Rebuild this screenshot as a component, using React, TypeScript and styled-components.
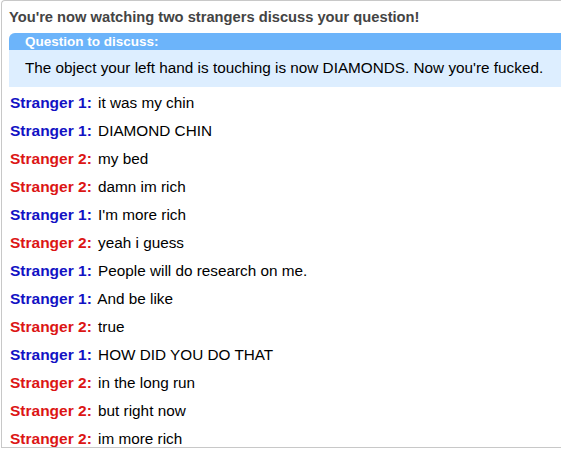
import React from "react";
import styled, { createGlobalStyle } from "styled-components";

const Global = createGlobalStyle`
  html, body { margin: 0; padding: 0; background: #fff; }
  body { font-family: "Liberation Sans", Arial, sans-serif; }
`;

const LogBox = styled.div`
  margin-left: 1px;
  width: 560px;
  height: 448px;
  box-sizing: border-box;
  border: 1px solid #c8c8c8;
  border-right: none;
  border-top-left-radius: 4px;
  padding: 6px 0 0 7px;
  overflow: hidden;
`;

const Status = styled.div`
  font-size: 14.7px;
  line-height: 20px;
  font-weight: bold;
  color: #444;
  white-space: nowrap;
`;

const Question = styled.div`
  margin-top: 6px;
  border-top-left-radius: 6px;
  overflow: hidden;
  background: #ddeeff;
`;

const QuestionHead = styled.div`
  background: #6cb4fa;
  color: #fff;
  font-weight: bold;
  font-size: 13.5px;
  height: 17px;
  line-height: 17px;
  padding-left: 16px;
`;

const QuestionText = styled.div`
  color: #000;
  font-size: 15.3px;
  height: 37px;
  line-height: 36px;
  padding-left: 16px;
  white-space: nowrap;
`;

const Messages = styled.div`
  margin-top: 2px;
  padding-left: 1px;
`;

const Row = styled.div`
  height: 28px;
  line-height: 28px;
  font-size: 15.3px;
  color: #000;
  white-space: nowrap;
`;

const Who = styled.strong<{ $who: 1 | 2 }>`
  color: ${(p) => (p.$who === 1 ? "#1212c4" : "#dc1515")};
  font-weight: bold;
  font-size: 15.5px;
  margin-right: 2px;
`;

const msgs: [1 | 2, string][] = [
  [1, "it was my chin"],
  [1, "DIAMOND CHIN"],
  [2, "my bed"],
  [2, "damn im rich"],
  [1, "I'm more rich"],
  [2, "yeah i guess"],
  [1, "People will do research on me."],
  [1, "And be like"],
  [2, "true"],
  [1, "HOW DID YOU DO THAT"],
  [2, "in the long run"],
  [2, "but right now"],
  [2, "im more rich"],
];

export default function App() {
  return (
    <>
      <Global />
      <LogBox>
        <Status>You're now watching two strangers discuss your question!</Status>
        <Question>
          <QuestionHead>Question to discuss:</QuestionHead>
          <QuestionText>
            The object your left hand is touching is now DIAMONDS. Now you're fucked.
          </QuestionText>
        </Question>
        <Messages>
          {msgs.map(([w, t], i) => (
            <Row key={i}>
              <Who $who={w}>Stranger {w}:</Who> {t}
            </Row>
          ))}
        </Messages>
      </LogBox>
    </>
  );
}
